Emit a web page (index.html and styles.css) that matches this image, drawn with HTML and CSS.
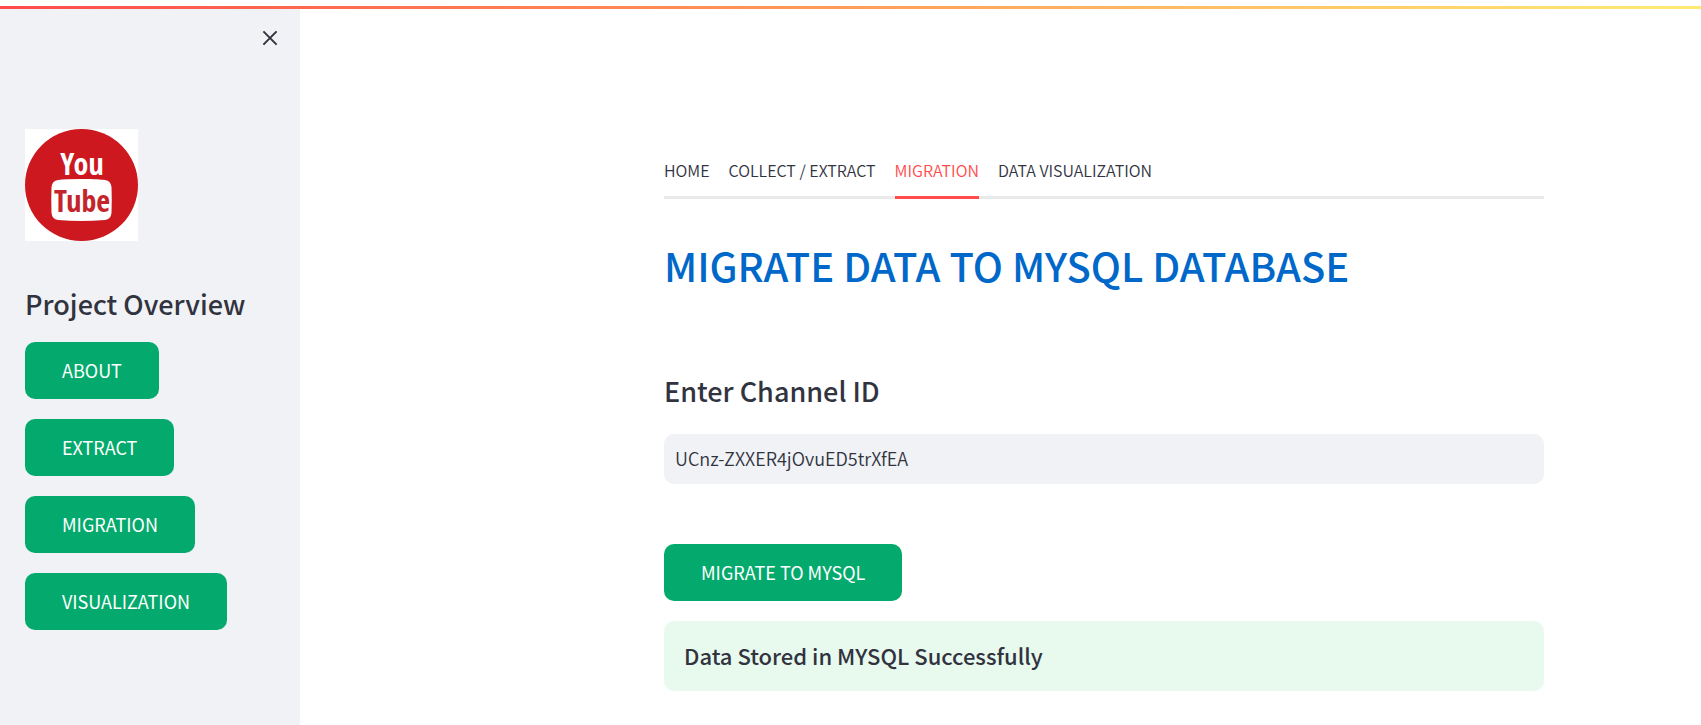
FILE: index.html
```html
<!DOCTYPE html>
<html lang="en">
<head>
<meta charset="utf-8">
<meta name="viewport" content="width=device-width, initial-scale=1">
<title>Migration</title>
<link rel="stylesheet" href="styles.css">
</head>
<body>
<div class="topbar"></div>
<div class="layout">
  <aside class="sidebar">
    <div class="sidebar-head">
      <button class="close" type="button" aria-label="Close sidebar">
        <svg width="16" height="16" viewBox="0 0 16 16" aria-hidden="true"><path d="M1.4 1.4 14.6 14.6M14.6 1.4 1.4 14.6" fill="none" stroke="currentColor" stroke-width="2"/></svg>
      </button>
    </div>
    <svg class="logo" width="113" height="112" viewBox="0 0 113 112" role="img" aria-label="YouTube">
      <rect width="113" height="112" fill="#fff"/>
      <ellipse cx="56.5" cy="56" rx="56.5" ry="56" fill="#cc181e"/>
      <path d="M56 50C70 50 76 50.500 80 51Q86 52 86.500 58Q87 71 86.500 84Q86 90 80 91Q56 93 33 91Q27 90 26.500 84Q26 71 26.500 58Q27 52 33 51Q40 50 56 50Z" fill="#fff"/>
      <text class="logo-text logo-you" x="57" y="46" text-anchor="middle">You</text>
      <text class="logo-text logo-tube" x="57" y="83" text-anchor="middle">Tube</text>
    </svg>
    <h2 class="heading">Project Overview</h2>
    <nav class="actions">
      <button class="btn" type="button">ABOUT</button>
      <button class="btn" type="button">EXTRACT</button>
      <button class="btn" type="button">MIGRATION</button>
      <button class="btn" type="button">VISUALIZATION</button>
    </nav>
  </aside>
  <main class="main">
    <div class="content">
      <div class="tabs" role="tablist">
        <button class="tab" type="button" role="tab" aria-selected="false">HOME</button>
        <button class="tab" type="button" role="tab" aria-selected="false">COLLECT / EXTRACT</button>
        <button class="tab tab-active" type="button" role="tab" aria-selected="true">MIGRATION</button>
        <button class="tab" type="button" role="tab" aria-selected="false">DATA VISUALIZATION</button>
      </div>
      <h1 class="title">MIGRATE DATA TO MYSQL DATABASE</h1>
      <label class="heading" for="channel">Enter Channel ID</label>
      <input class="field" id="channel" type="text" value="UCnz-ZXXER4jOvuED5trXfEA" spellcheck="false">
      <button class="btn" type="button">MIGRATE TO MYSQL</button>
      <div class="alert" role="status">Data Stored in MYSQL Successfully</div>
    </div>
  </main>
</div>
</body>
</html>
```
FILE: styles.css
```css
* { box-sizing: border-box; }
body {
  margin: 0;
  min-height: 100vh;
  display: flex;
  flex-direction: column;
  background: #fff;
  color: #31333f;
  font-family: "Noto Sans CJK SC", "Noto Sans", sans-serif;
  font-size: 18px;
}
button, input { font: inherit; color: inherit; }
.topbar {
  height: 9px;
  border-top: 6px solid #fff;
  background: linear-gradient(90deg, #ff4b4b 0%, #ffa05a 52%, #ffe973 98%) padding-box;
}
.layout { flex: 1; display: flex; }
.sidebar {
  flex: 0 0 300px;
  padding: 15px 16px 24px 25px;
  background: #f0f2f6;
}
.sidebar-head { display: flex; justify-content: flex-end; height: 105px; }
.close {
  display: grid;
  place-items: center;
  width: 28px;
  height: 28px;
  padding: 0;
  border: 0;
  background: none;
  cursor: pointer;
}
.logo { display: block; }
.logo-text {
  font-family: "Noto Sans ExtraCondensed", "Open Sans Condensed", "Roboto Condensed", "Liberation Sans Narrow", sans-serif;
  font-size: 30px;
  font-weight: 700;
}
.logo-you { fill: #fff; }
.logo-tube { fill: #c4252b; }
.heading {
  display: block;
  margin: 0;
  font-size: 27px;
  font-weight: 500;
  line-height: 36px;
}
.sidebar .heading { margin: 45px 0 20px; }
.actions { display: flex; flex-direction: column; align-items: flex-start; gap: 20px; }
.btn {
  height: 57px;
  padding: 0 37px 2px;
  border: 0;
  border-radius: 10px;
  background: #04aa6d;
  color: #fff;
  cursor: pointer;
}
.main {
  flex: 1;
  display: grid;
  grid-template-columns: 364fr 880fr 157fr;
  align-items: start;
}
.content { grid-column: 2; padding-top: 137px; padding-bottom: 32px; }
.tabs { display: flex; gap: 19px; height: 53px; border-bottom: 3px solid #eaeaeb; }
.tab {
  height: 53px;
  padding: 0 0 2px;
  border: 0;
  border-bottom: 3px solid transparent;
  background: none;
  font-size: 16px;
  font-weight: 350;
  white-space: nowrap;
  cursor: pointer;
}
.tab-active { color: #ff4b4b; border-bottom-color: #ff4b4b; }
.title {
  margin: 39px 0 81px;
  color: #0068c9;
  font-size: 40px;
  font-weight: 500;
  line-height: 54px;
}
.field {
  display: block;
  width: 100%;
  height: 50px;
  margin: 25px 0 60px;
  padding: 0 11px 2px;
  border: 0;
  border-radius: 10px;
  background: #f0f2f6;
  font-weight: 350;
}
.alert {
  margin-top: 20px;
  padding: 18px 20px 20px;
  border-radius: 10px;
  background: #e8f9ee;
  font-size: 22px;
  font-weight: 500;
  line-height: 32px;
}
```
